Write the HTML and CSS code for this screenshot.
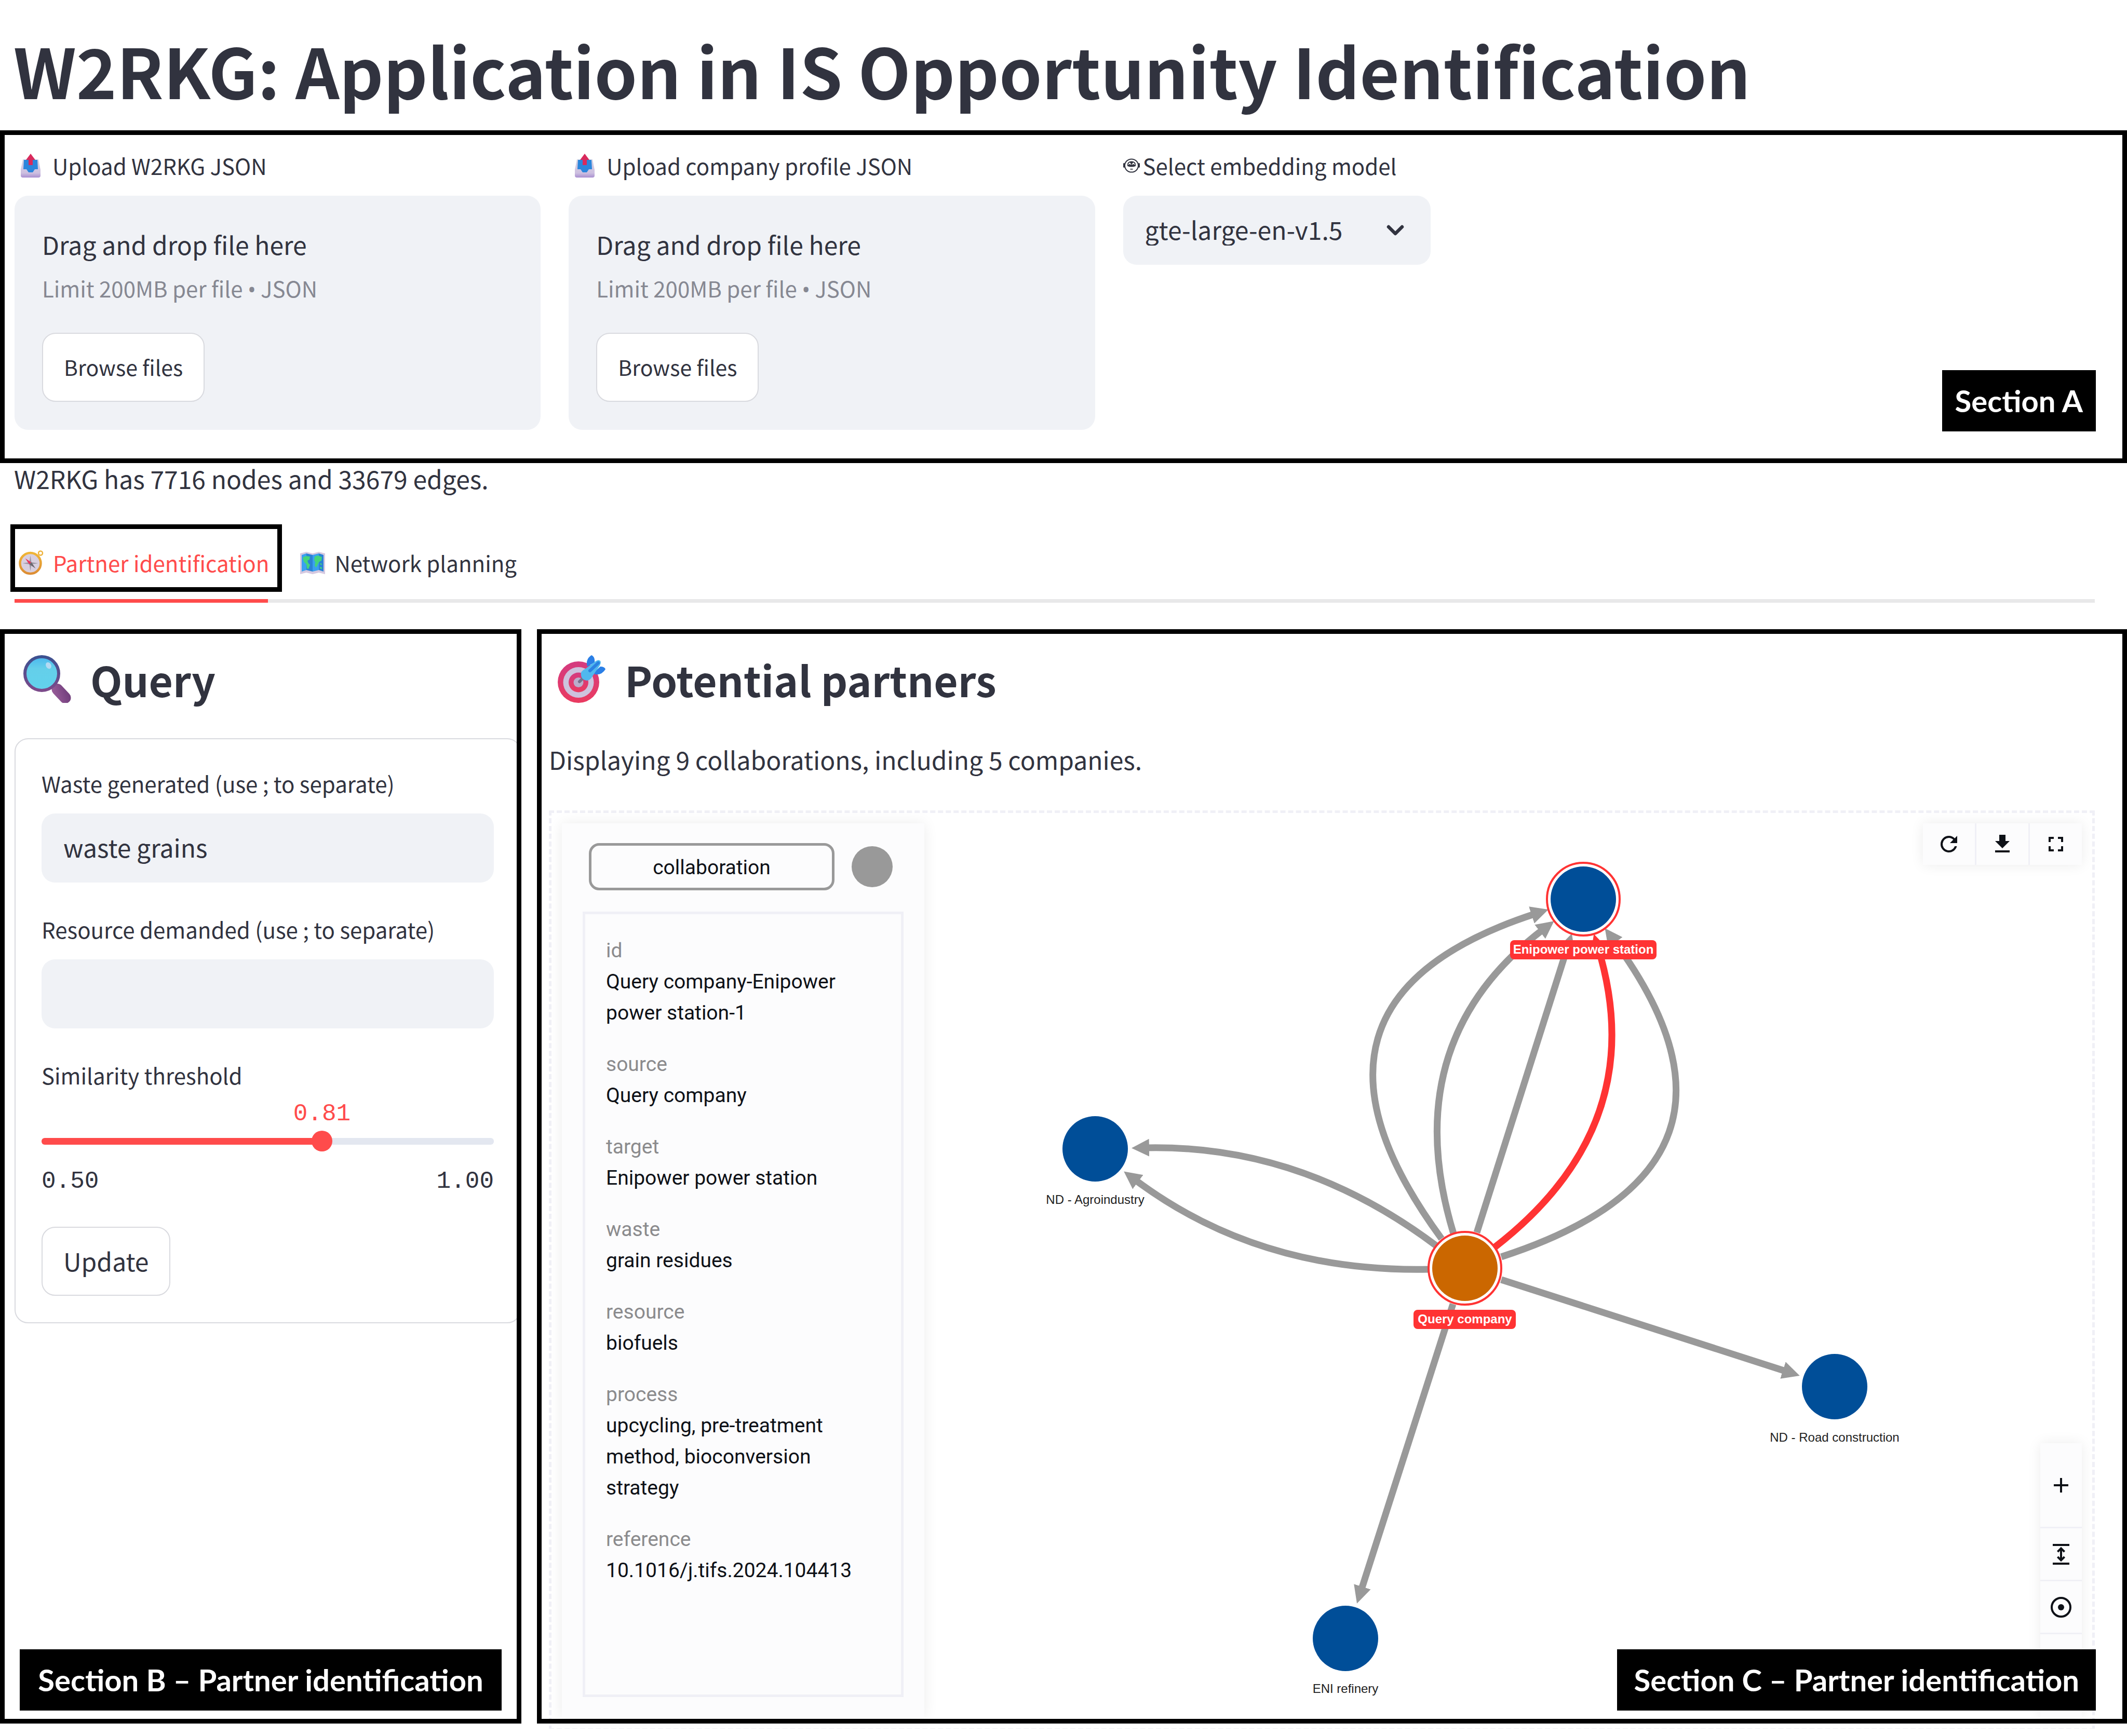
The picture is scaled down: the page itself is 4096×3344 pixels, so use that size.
FILE: index.html
```html
<!DOCTYPE html>
<html lang="en">
<head>
<meta charset="utf-8">
<meta name="viewport" content="width=device-width, initial-scale=1">
<title>W2RKG: Application in IS Opportunity Identification</title>
<link rel="stylesheet" href="styles.css">
</head>
<body>
<svg class="defs" aria-hidden="true">
  <defs>
    <linearGradient id="tray" x1="0" y1="0" x2="0" y2="1"><stop offset="0" stop-color="#d6d3e2"/><stop offset=".75" stop-color="#cdbfe0"/><stop offset="1" stop-color="#a98fd0"/></linearGradient>
    <linearGradient id="rim" x1="0" y1="0" x2="0" y2="1"><stop offset="0" stop-color="#3d5190"/><stop offset="1" stop-color="#7c4a8a"/></linearGradient>
    <linearGradient id="glass" x1="0" y1="0" x2="0" y2="1"><stop offset="0" stop-color="#4bb8ef"/><stop offset=".35" stop-color="#64cfea"/><stop offset="1" stop-color="#62d2ec"/></linearGradient>
    <linearGradient id="handle" x1="1" y1="0" x2="0" y2="1"><stop offset="0" stop-color="#6c3a78"/><stop offset="1" stop-color="#9c609c"/></linearGradient>
    <linearGradient id="pink" x1="0" y1="0" x2="0" y2="1"><stop offset="0" stop-color="#d43b80"/><stop offset="1" stop-color="#ea3a60"/></linearGradient>
    <linearGradient id="gold" x1="0" y1="0" x2="0" y2="1"><stop offset="0" stop-color="#f0b536"/><stop offset="1" stop-color="#dc8d34"/></linearGradient>
    <symbol id="icon-upload" viewBox="0 0 40 46">
      <path d="M5 11h30l4 20v11q0 4-4 4H5q-4 0-4-4V31z" fill="url(#tray)"/>
      <path d="M7 12h26l1 18h-6l-4 6h-8l-4-6H6z" fill="#2b86dc"/>
      <path d="M20 0l9 12h-5v10h-8V12h-5z" fill="#d92a5c"/>
    </symbol>
  </defs>
</svg>

<h1 class="page-title">W2RKG: Application in IS Opportunity Identification</h1>

<section class="framed setup">
  <div class="field">
    <label class="field-label emoji-label" for="kg-file"><svg class="icon-tray"><use href="#icon-upload"/></svg>Upload W2RKG JSON</label>
    <div class="dropzone">
      <p class="drop-title">Drag and drop file here</p>
      <p class="drop-limit">Limit 200MB per file <span class="bullet">•</span> JSON</p>
      <button class="btn btn-small" id="kg-file" type="button">Browse files</button>
    </div>
  </div>
  <div class="field">
    <label class="field-label emoji-label" for="company-file"><svg class="icon-tray"><use href="#icon-upload"/></svg>Upload company profile JSON</label>
    <div class="dropzone">
      <p class="drop-title">Drag and drop file here</p>
      <p class="drop-limit">Limit 200MB per file <span class="bullet">•</span> JSON</p>
      <button class="btn btn-small" id="company-file" type="button">Browse files</button>
    </div>
  </div>
  <div class="field">
    <label class="field-label robot-label" for="model">
      <svg class="icon-robot" viewBox="0 0 32 28" aria-hidden="true"><ellipse cx="16" cy="14" rx="13" ry="12.6" fill="none" stroke="#31333f" stroke-width="2"/><path d="M0 10q2-2 3 0v7q-1 2-3 0zM32 10q-2-2-3 0v7q1 2 3 0z" fill="#31333f"/><path d="M8 12q0-6 8-6.500q8 .5 8 6.500v3q-8 3-16 0z" fill="#31333f"/><path d="M10 12l2.500-3 2.500 3M17 12l2.500-3 2.500 3" fill="none" stroke="#fff" stroke-width="1.600"/><path d="M13.500 20.800h5" stroke="#31333f" stroke-width="1.600"/></svg>Select embedding model</label>
    <div class="select-wrap">
      <select class="control" id="model"><option>gte-large-en-v1.5</option></select>
      <svg class="chevron" viewBox="0 0 34 22" aria-hidden="true"><path d="M4 4l13 13L30 4" fill="none" stroke="#31333f" stroke-width="6.500" stroke-linecap="round" stroke-linejoin="round"/></svg>
    </div>
  </div>
  <span class="tag tag-a">Section A</span>
</section>

<p class="summary">W2RKG has 7716 nodes and 33679 edges.</p>

<nav class="tabs">
  <button class="tab tab-active" type="button">
    <svg class="icon-tab" viewBox="0 0 48 48" aria-hidden="true"><circle cx="42" cy="5.500" r="4" fill="none" stroke="#eeb33c" stroke-width="2.500"/><circle cx="22.500" cy="25" r="20" fill="#d8cfdf" stroke="url(#gold)" stroke-width="4.500"/><path d="M22.500 10l2 13 13 2-13 2-2 13-2-13-13-2 13-2z" fill="#9c97a3"/><path d="M12.500 15.500l11.500 7.500-3.500 4z" fill="#e8345c"/><path d="M32.500 35l-12-8 4-4z" fill="#6b6770"/></svg>Partner identification</button>
  <button class="tab" type="button">
    <svg class="icon-tab" viewBox="0 0 48 48" aria-hidden="true"><path d="M0 6l12-3 12 3 12-3 12 3v40l-12-3-12 3-12-3-12 3z" fill="#d5c8e0"/><path d="M3 9l9-3v32l-9 3zM24 9l12-3v32l-12 3z" fill="#3aa0ef"/><path d="M12 6l12 3v32l-12-3zM36 6l9 3v32l-9-3z" fill="#2a82d6"/><path d="M5 14l6-3 8 1-1 6-4 2 2 5 3 3-3 8-3-1-1-8-5-5zM28 12l6-2 8 3-1 7-4 2-3 5-3 6-3-3 1-7-2-4zM38 25l4 1v2l-4-1zM38 32l4 1v3l-4-1z" fill="#44d47c"/></svg>Network planning</button>
</nav>
<div class="tab-line"><div class="tab-line-active"></div></div>

<main class="panels">
  <section class="framed query">
    <h2 class="panel-title">
      <svg class="icon-title" viewBox="0 0 92 92" aria-hidden="true"><rect x="51" y="63" width="44" height="22" rx="11" transform="rotate(47 73 74)" fill="url(#handle)"/><circle cx="35.500" cy="35.500" r="32.500" fill="url(#glass)" stroke="url(#rim)" stroke-width="6"/><ellipse cx="48.500" cy="20" rx="5" ry="6.500" transform="rotate(-30 48.500 20)" fill="#b4daf3"/></svg>Query</h2>
    <form class="form">
      <label class="field-label" for="waste">Waste generated (use ; to separate)</label>
      <input class="control" id="waste" type="text" value="waste grains">
      <label class="field-label next" for="resource">Resource demanded (use ; to separate)</label>
      <input class="control" id="resource" type="text">
      <label class="field-label next" for="threshold">Similarity threshold</label>
      <output class="mono value" for="threshold">0.81</output>
      <div class="slider"><input id="threshold" type="range" min="0.5" max="1" step="0.01" value="0.81"></div>
      <div class="mono bounds"><span>0.50</span><span>1.00</span></div>
      <button class="btn btn-update" type="button">Update</button>
    </form>
    <span class="tag tag-b">Section B – Partner identification</span>
  </section>

  <section class="framed partners">
    <h2 class="panel-title">
      <svg class="icon-title" viewBox="0 0 92 92" aria-hidden="true"><circle cx="40" cy="52" r="40" fill="url(#pink)"/><circle cx="40" cy="52.500" r="29.500" fill="#cdc2dd"/><circle cx="40" cy="52.500" r="19" fill="url(#pink)"/><circle cx="40" cy="52.500" r="9.500" fill="#b9adcb"/><path d="M42 51l7-7" stroke="#77708a" stroke-width="6" stroke-linecap="round"/><path d="M57 22q-4-14 8-22q7 3 6 14zM71 32l11-10q8 0 10 5q-7 12-21 10z" fill="#2a7fe6"/><path d="M45 33q4-5 10-8l19-14q5-3 8 0q2 3-1 9L66 42q-4 7-10 7q-13-2-11-16z" fill="#50b8ee"/><path d="M62 30l16-15" stroke="#2b82e2" stroke-width="6" stroke-linecap="round"/></svg>Potential partners</h2>
    <p class="status">Displaying 9 collaborations, including 5 companies.</p>
    <div class="canvas">
      <svg class="graph" viewBox="1061 1566 2967 1763" role="img" aria-label="Collaboration network">
        <defs>
          <marker id="arrow" markerUnits="userSpaceOnUse" markerWidth="36" markerHeight="36" refX="8" refY="18" orient="auto"><path d="M0 1L34 18L0 35z" fill="#999"/></marker>
          <marker id="arrow-red" markerUnits="userSpaceOnUse" markerWidth="36" markerHeight="36" refX="8" refY="18" orient="auto"><path d="M0 1L34 18L0 35z" fill="#f33"/></marker>
        </defs>
        <g class="edges">
          <path d="M2775 2386Q2439 1928 2956 1760"/>
          <path d="M2798 2376Q2686 2007 2971 1790"/>
          <path d="M2843 2374L3018 1823"/>
          <path d="M2890 2421Q3429 2246 3105 1809"/>
          <path d="M2764 2399Q2504 2204 2204 2211"/>
          <path d="M2751 2445Q2424 2452 2184 2272"/>
          <path d="M2890 2465L3440 2642"/>
          <path d="M2797 2512L2620 3064"/>
          <path class="edge-selected" d="M2878 2402Q3181 2167 3076 1824"/>
        </g>
        <g class="nodes">
          <circle class="ring" cx="3048" cy="1732" r="70"/><circle cx="3048" cy="1732" r="63"/>
          <circle class="ring" cx="2820" cy="2443" r="70"/><circle class="company" cx="2820" cy="2443" r="63"/>
          <circle cx="2108" cy="2213" r="63"/>
          <circle cx="3532" cy="2671" r="63"/>
          <circle cx="2590" cy="3156" r="63"/>
        </g>
        <g class="names">
          <text x="2108" y="2319">ND - Agroindustry</text>
          <text x="3532" y="2777">ND - Road construction</text>
          <text x="2590" y="3261">ENI refinery</text>
          <rect x="2907" y="1811" width="282" height="37" rx="8"/><text class="selected" x="3048" y="1837">Enipower power station</text>
          <rect x="2721" y="2523" width="197" height="37" rx="8"/><text class="selected" x="2820" y="2549">Query company</text>
        </g>
      </svg>

      <aside class="details">
        <div class="details-head"><span class="pill">collaboration</span><span class="dot"></span></div>
        <dl class="props">
          <div><dt>id</dt><dd>Query company-Enipower power station-1</dd></div>
          <div><dt>source</dt><dd>Query company</dd></div>
          <div><dt>target</dt><dd>Enipower power station</dd></div>
          <div><dt>waste</dt><dd>grain residues</dd></div>
          <div><dt>resource</dt><dd>biofuels</dd></div>
          <div><dt>process</dt><dd>upcycling, pre-treatment method, bioconversion strategy</dd></div>
          <div><dt>reference</dt><dd>10.1016/j.tifs.2024.104413</dd></div>
        </dl>
      </aside>

      <div class="tools tools-top">
        <button type="button" aria-label="Refresh"><svg viewBox="0 0 24 24"><path d="M17.650 6.350A7.960 7.960 0 0 0 12 4a8 8 0 1 0 7.730 10h-2.080A6 6 0 1 1 12 6c1.660 0 3.140.690 4.220 1.780L13 11h7V4z"/></svg></button>
        <button type="button" aria-label="Download"><svg viewBox="0 0 24 24"><path d="M19 9h-4V3H9v6H5l7 7 7-7zM5 18v2h14v-2z"/></svg></button>
        <button type="button" aria-label="Fullscreen"><svg viewBox="0 0 24 24"><path d="M7 14H5v5h5v-2H7zM5 10h2V7h3V5H5zM17 17h-3v2h5v-5h-2zM14 5v2h3v3h2V5z"/></svg></button>
      </div>
      <div class="tools tools-side">
        <button class="tall" type="button" aria-label="Zoom in"><svg viewBox="0 0 24 24"><path d="M19 13h-6v6h-2v-6H5v-2h6V5h2v6h6z"/></svg></button>
        <button type="button" aria-label="Fit"><svg viewBox="0 0 24 24"><path d="M4 2h16v2H4zM4 20h16v2H4z"/><path d="M12 6.500v11M8.700 9.600L12 6.300l3.300 3.300M8.700 14.400l3.300 3.300 3.300-3.300" fill="none" stroke="#0e1117" stroke-width="2"/></svg></button>
        <button type="button" aria-label="Center"><svg viewBox="0 0 24 24"><circle cx="12" cy="12" r="9" fill="none" stroke="#0e1117" stroke-width="2"/><circle cx="12" cy="12" r="3"/></svg></button>
        <button class="tall" type="button" aria-label="Zoom out"></button>
      </div>
    </div>
    <span class="tag tag-c">Section C – Partner identification</span>
  </section>
</main>
</body>
</html>
```
FILE: styles.css
```css
* { box-sizing: border-box; }

body {
  margin: 0;
  padding-bottom: 10px;
  background: #fff;
  color: #31333f;
  font-family: "Noto Sans CJK SC", "Noto Sans", sans-serif;
  font-size: 48px;
  line-height: 64px;
}

h1, h2, p, dl, dd { margin: 0; }
svg { display: block; flex: none; }
button, input, select { font: inherit; color: inherit; }
.defs { position: absolute; width: 0; height: 0; }

.page-title {
  padding: 54px 26px 37px;
  font-size: 132px;
  line-height: 160px;
  font-weight: 700;
}

/* Black annotation frame, drawn above the content it encloses */
.framed { position: relative; }
.framed::after {
  content: "";
  position: absolute;
  inset: 0;
  border: 9px solid #000;
  pointer-events: none;
}

.tag {
  position: absolute;
  z-index: 2;
  height: 118px;
  background: #000;
  color: #fff;
  font: 700 58px/118px Lato, sans-serif;
  text-align: center;
  white-space: nowrap;
}
.tag-a { right: 60px; bottom: 61px; padding: 0 25px; }
.tag-b { left: 38px; right: 38px; bottom: 25px; }
.tag-c { right: 60px; bottom: 25px; padding: 0 32px; }

/* Section A */
.setup {
  display: grid;
  grid-template-columns: 1013fr 1013fr 592fr 1225fr;
  column-gap: 54px;
  padding: 38px 62px 64px 28px;
}

.field-label {
  display: block;
  font-size: 42px;
  line-height: 60px;
  margin-bottom: 28px;
}
.emoji-label, .robot-label { display: flex; align-items: center; }
.emoji-label { padding-left: 11px; gap: 22px; }
.robot-label { gap: 6px; }
.icon-tray { width: 40px; height: 46px; }
.icon-robot { width: 32px; height: 28px; }

.dropzone {
  padding: 61px 53px 54px;
  border-radius: 26px;
  background: #f0f2f6;
}
.drop-limit {
  margin: 23px 0 54px;
  font-size: 42px;
  line-height: 60px;
  color: #868892;
}
.bullet { font-family: "Noto Sans", sans-serif; }

.btn {
  display: block;
  height: 133px;
  padding: 0 40px 3px;
  border: 2px solid #d9dadf;
  border-radius: 26px;
  background: #fff;
}
.btn-small { font-size: 41px; }

.control {
  display: block;
  width: 100%;
  height: 133px;
  padding: 0 42px 5px;
  border: 0;
  border-radius: 26px;
  background: #f0f2f6;
  appearance: none;
}
.select-wrap { position: relative; }
.chevron {
  position: absolute;
  right: 51px;
  top: 56px;
  width: 34px;
  height: 22px;
}

.summary { padding: 5px 27px 0; line-height: 48px; }

/* Tabs */
.tabs {
  display: flex;
  gap: 35px;
  padding: 65px 20px 14px;
}
.tab {
  display: flex;
  align-items: center;
  gap: 18px;
  height: 130px;
  padding: 18px 0 0;
  border: 0;
  background: none;
  font-size: 42px;
  line-height: 60px;
}
.tab-active {
  padding: 18px 16px 0 7px;
  border: 9px solid #000;
  color: #ff4b4b;
}
.icon-tab { width: 48px; height: 48px; }
.tab-line { height: 7px; margin: 0 62px 51px 28px; background: #e8e8e9; }
.tab-line-active { width: 488px; height: 7px; background: #ff4b4b; }

/* Panels */
.panels {
  display: grid;
  grid-template-columns: 1004fr 3062fr;
  column-gap: 30px;
}
.query { padding: 46px 1px 0 28px; }
.partners { padding: 46px 62px 0 23px; }
.panel-title {
  display: flex;
  align-items: center;
  gap: 37px;
  padding-left: 17px;
  font-size: 80px;
  line-height: 100px;
  font-weight: 700;
}
.icon-title { width: 92px; height: 92px; }
.status { margin: 72px 0 67px; }

.form {
  margin-top: 64px;
  padding: 55px 50px 51px;
  border: 2px solid #d9dadf;
  border-radius: 26px;
}
.next { margin-top: 60px; }
.mono { font: 46px/52px "Liberation Mono", monospace; }
.value {
  display: block;
  width: max-content;
  margin: -9px 0 0 62%;
  color: #ff4b4b;
  transform: translateX(-50%);
}

.slider { position: relative; margin: 6px 0 32px; }
.slider::before {
  content: "";
  position: absolute;
  left: 0;
  right: 0;
  top: 14px;
  height: 13px;
  border-radius: 6px;
  background: linear-gradient(to right, #ff4b4b 62%, #e3e7f0 62%);
}
.slider input {
  position: relative;
  display: block;
  width: calc(100% + 40px);
  height: 40px;
  margin: 0 -20px;
  background: none;
  appearance: none;
}
.slider input::-webkit-slider-thumb {
  appearance: none;
  width: 40px;
  height: 40px;
  border-radius: 50%;
  background: #ff4b4b;
}
.bounds { display: flex; justify-content: space-between; }
.btn-update { margin-top: 61px; }

/* Network canvas */
.canvas {
  position: relative;
  margin-bottom: -14px;
  border: 5px dashed #f0f0f6;
}
.graph { width: 100%; height: auto; }
.edges path { fill: none; stroke: #999; stroke-width: 13px; marker-end: url(#arrow); }
.edges .edge-selected { stroke: #f33; marker-end: url(#arrow-red); }
.nodes circle { fill: #004e98; }
.nodes .company { fill: #cb6700; }
.nodes .ring { fill: #fff; stroke: #f33; stroke-width: 4px; }
.names rect { fill: #f33; }
.names text {
  font: 24px "Liberation Sans", Arial, sans-serif;
  text-anchor: middle;
  fill: #222;
}
.names .selected { font-weight: 700; fill: #fff; }

.details {
  position: absolute;
  left: 20px;
  top: 20px;
  bottom: 20px;
  width: 698px;
  display: flex;
  flex-direction: column;
  padding: 38px 40px 40px;
  background: #fcfcfd;
  box-shadow: 0 0 26px rgba(0, 0, 0, .08);
  color: #0e1117;
  font: 39px/60px Roboto, sans-serif;
}
.details-head {
  display: flex;
  align-items: center;
  gap: 33px;
  padding: 0 21px 0 12px;
  margin-bottom: 41px;
}
.pill {
  flex: 1;
  height: 91px;
  border: 5px solid #999;
  border-radius: 20px;
  line-height: 84px;
  text-align: center;
}
.dot { width: 79px; height: 79px; border-radius: 50%; background: #999; }
.props {
  flex: 1;
  display: flex;
  flex-direction: column;
  gap: 39px;
  padding: 40px;
  border: 5px solid #f0f0f6;
}
.props dt { color: #8b8b8d; }

.tools {
  position: absolute;
  right: 20px;
  display: flex;
  gap: 3px;
  background: #f0f0f6;
  box-shadow: 0 0 26px rgba(0, 0, 0, .08);
}
.tools button {
  display: grid;
  place-items: center;
  width: 100px;
  height: 80px;
  padding: 0;
  border: 0;
  background: #fcfcfd;
}
.tools svg { width: 48px; height: 48px; fill: #0e1117; }
.tools-top { top: 20px; }
.tools-side { bottom: 20px; flex-direction: column; }
.tools-side button { width: 80px; height: 99px; }
.tools-side .tall { height: 161px; }
```
